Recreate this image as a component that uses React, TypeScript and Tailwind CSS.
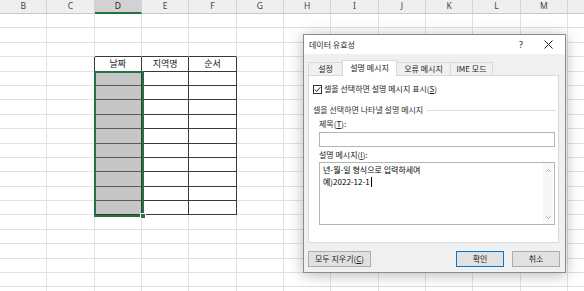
import React from 'react';

const COLS = ['B', 'C', 'D', 'E', 'F', 'G', 'H', 'I', 'J', 'K', 'L', 'M', ''];
const ROWS = Array.from({ length: 20 }, (_, i) => i);
const HEAD: Record<number, string> = { 2: '날짜', 3: '지역명', 4: '순서' };

function inTable(r: number, c: number) {
  return r >= 3 && r <= 13 && c >= 2 && c <= 4;
}

function Cell({ r, c }: { r: number; c: number }) {
  const rightDark = inTable(r, c) || inTable(r, c + 1);
  const bottomDark = inTable(r, c) || inTable(r + 1, c);
  const selFill = c === 2 && r >= 4 && r <= 13;
  const bottomSel = c === 2 && r >= 4 && r <= 12;
  return (
    <div
      className={`shrink-0 w-[47.33px] h-full border-r border-b flex items-center justify-center text-[9px] text-[#1a1a1a] ${
        rightDark ? 'border-r-[#3a3a3a]' : 'border-r-[#e1e1e1]'
      } ${bottomSel ? 'border-b-[#5a5a5a]' : bottomDark ? 'border-b-[#3a3a3a]' : 'border-b-[#e1e1e1]'} ${
        selFill ? 'bg-[#c6c6c6]' : 'bg-white'
      }`}
    >
      {r === 3 && HEAD[c] ? HEAD[c] : null}
    </div>
  );
}

function U({ children }: { children: React.ReactNode }) {
  return <span className="underline underline-offset-[1px]">{children}</span>;
}

export default function App() {
  return (
    <div className="relative w-[584px] h-[291px] overflow-hidden bg-white font-[family-name:'Noto_Sans','Noto_Sans_CJK_KR',sans-serif]">
      {/* column header */}
      <div className="flex h-[14px]">
        {COLS.map((c, i) => (
          <div
            key={i}
            className={`shrink-0 w-[47.33px] h-full flex items-center justify-center text-[8.5px] text-[#444] border-r border-r-[#d4d4d4] ${
              i === 2 ? 'bg-[#d2d2d2] border-b-2 border-b-[#217346] text-[#262626]' : 'bg-[#efefef] border-b border-b-[#c8c8c8]'
            }`}
          >
            {c}
          </div>
        ))}
      </div>
      {/* rows */}
      {ROWS.map((r) => (
        <div key={r} className="flex h-[14.4px]">
          {COLS.map((c, ci) => (
            <Cell key={ci} r={r} c={ci} />
          ))}
        </div>
      ))}

      {/* selection */}
      <div className="absolute left-[94px] top-[71px] w-[50px] h-[146px] border-2 border-[#217346]" />
      <div className="absolute left-[140px] top-[213px] w-[6px] h-[6px] bg-[#217346] border border-white" />

      {/* dialog */}
      <div className="absolute left-[303px] top-[34px] w-[263px] h-[239px] flex flex-col border border-[#8c8c8c] bg-[#f0f0f0] shadow-[0_2px_14px_rgba(0,0,0,0.28)] text-[8px] leading-[10px] text-[#1e1e1e] font-[family-name:'Noto_Sans_CJK_KR',sans-serif]">
        <div className="h-[19px] shrink-0 bg-white flex items-center pl-[5px] pr-[12px]">
          <span>데이터 유효성</span>
          <span className="ml-auto mr-[21px] text-[9px] font-[family-name:'Noto_Sans',sans-serif]">?</span>
          <svg width="9" height="9" viewBox="0 0 9 9" className="block">
            <path d="M0.5 0.5 L8.5 8.5 M8.5 0.5 L0.5 8.5" stroke="#222" strokeWidth="1" />
          </svg>
        </div>

        <div className="flex-1 flex flex-col pt-[6px] pl-[4px] pr-[6px]">
          {/* tabs */}
          <div className="flex items-end h-[15px]">
            <div className="w-[34px] h-[13px] border-l border-t border-[#d9d9d9] flex items-center justify-center">설정</div>
            <div className="relative z-10 w-[55px] h-[16px] -mb-[1px] bg-white border-x border-t border-[#d9d9d9] flex items-center justify-center pb-[1px]">
              설명 메시지
            </div>
            <div className="w-[54px] h-[13px] border-t border-r border-[#d9d9d9] flex items-center justify-center">오류 메시지</div>
            <div className="w-[42px] h-[13px] border-t border-r border-[#d9d9d9] flex items-center justify-center">IME 모드</div>
          </div>

          {/* panel */}
          <div className="h-[168px] bg-white border border-[#d9d9d9] flex flex-col">
            <div className="flex items-center h-[10px] mt-[8px] ml-[4px]">
              <div className="w-[9px] h-[9px] border border-[#333] flex items-center justify-center">
                <svg width="7" height="7" viewBox="0 0 7 7" className="block">
                  <path d="M0.8 3.6 L2.7 5.5 L6.3 1.2" stroke="#222" strokeWidth="1" fill="none" />
                </svg>
              </div>
              <span className="ml-[2px]">
                셀을 선택하면 설명 메시지 표시(<U>S</U>)
              </span>
            </div>

            <div className="flex items-center h-[10px] mt-[11px] ml-[4px] mr-[2px]">
              <span className="text-[#333]">셀을 선택하면 나타낼 설명 메시지</span>
              <div className="flex-1 h-px bg-[#dcdcdc] ml-[4px]" />
            </div>

            <div className="h-[10px] mt-[4px] ml-[10px]">
              제목(<U>T</U>):
            </div>
            <div className="h-[15px] mt-[3px] ml-[10px] mr-[3px] border border-[#b4b4b4] bg-white" />

            <div className="h-[10px] mt-[3px] ml-[10px]">
              설명 메시지(<U>I</U>):
            </div>
            <div className="h-[63px] mt-[2px] ml-[10px] mr-[3px] border border-[#b4b4b4] bg-white flex">
              <div className="flex-1 pl-[3px] pt-[1px] leading-[12px] text-black">
                <div>년-월-일 형식으로 입력하세여</div>
                <div className="flex items-center">
                  <span>예)2022-12-1</span>
                  <span className="w-px h-[10px] bg-black ml-[1px]" />
                </div>
              </div>
              <div className="w-[10px] flex flex-col items-center justify-between pt-[6px] pb-[5px] mr-[1px] bg-[#f7f7f7]">
                <svg width="5" height="3" viewBox="0 0 5 3" className="block">
                  <path d="M0.3 2.7 L2.5 0.5 L4.7 2.7" stroke="#a6a6a6" strokeWidth="1" fill="none" />
                </svg>
                <svg width="5" height="3" viewBox="0 0 5 3" className="block">
                  <path d="M0.3 0.3 L2.5 2.5 L4.7 0.3" stroke="#a6a6a6" strokeWidth="1" fill="none" />
                </svg>
              </div>
            </div>
          </div>

          {/* buttons */}
          <div className="flex h-[16px] mt-[8px] -mr-[1px]">
            <div className="w-[63px] h-full border border-[#adadad] bg-[#e1e1e1] flex items-center justify-center">
              모두 지우기(<U>C</U>)
            </div>
            <div className="ml-auto w-[48px] h-full border border-[#0078d7] bg-[#e1e1e1] flex items-center justify-center">
              확인
            </div>
            <div className="ml-[8px] w-[48px] h-full border border-[#adadad] bg-[#e1e1e1] flex items-center justify-center">
              취소
            </div>
          </div>
        </div>
      </div>
    </div>
  );
}
